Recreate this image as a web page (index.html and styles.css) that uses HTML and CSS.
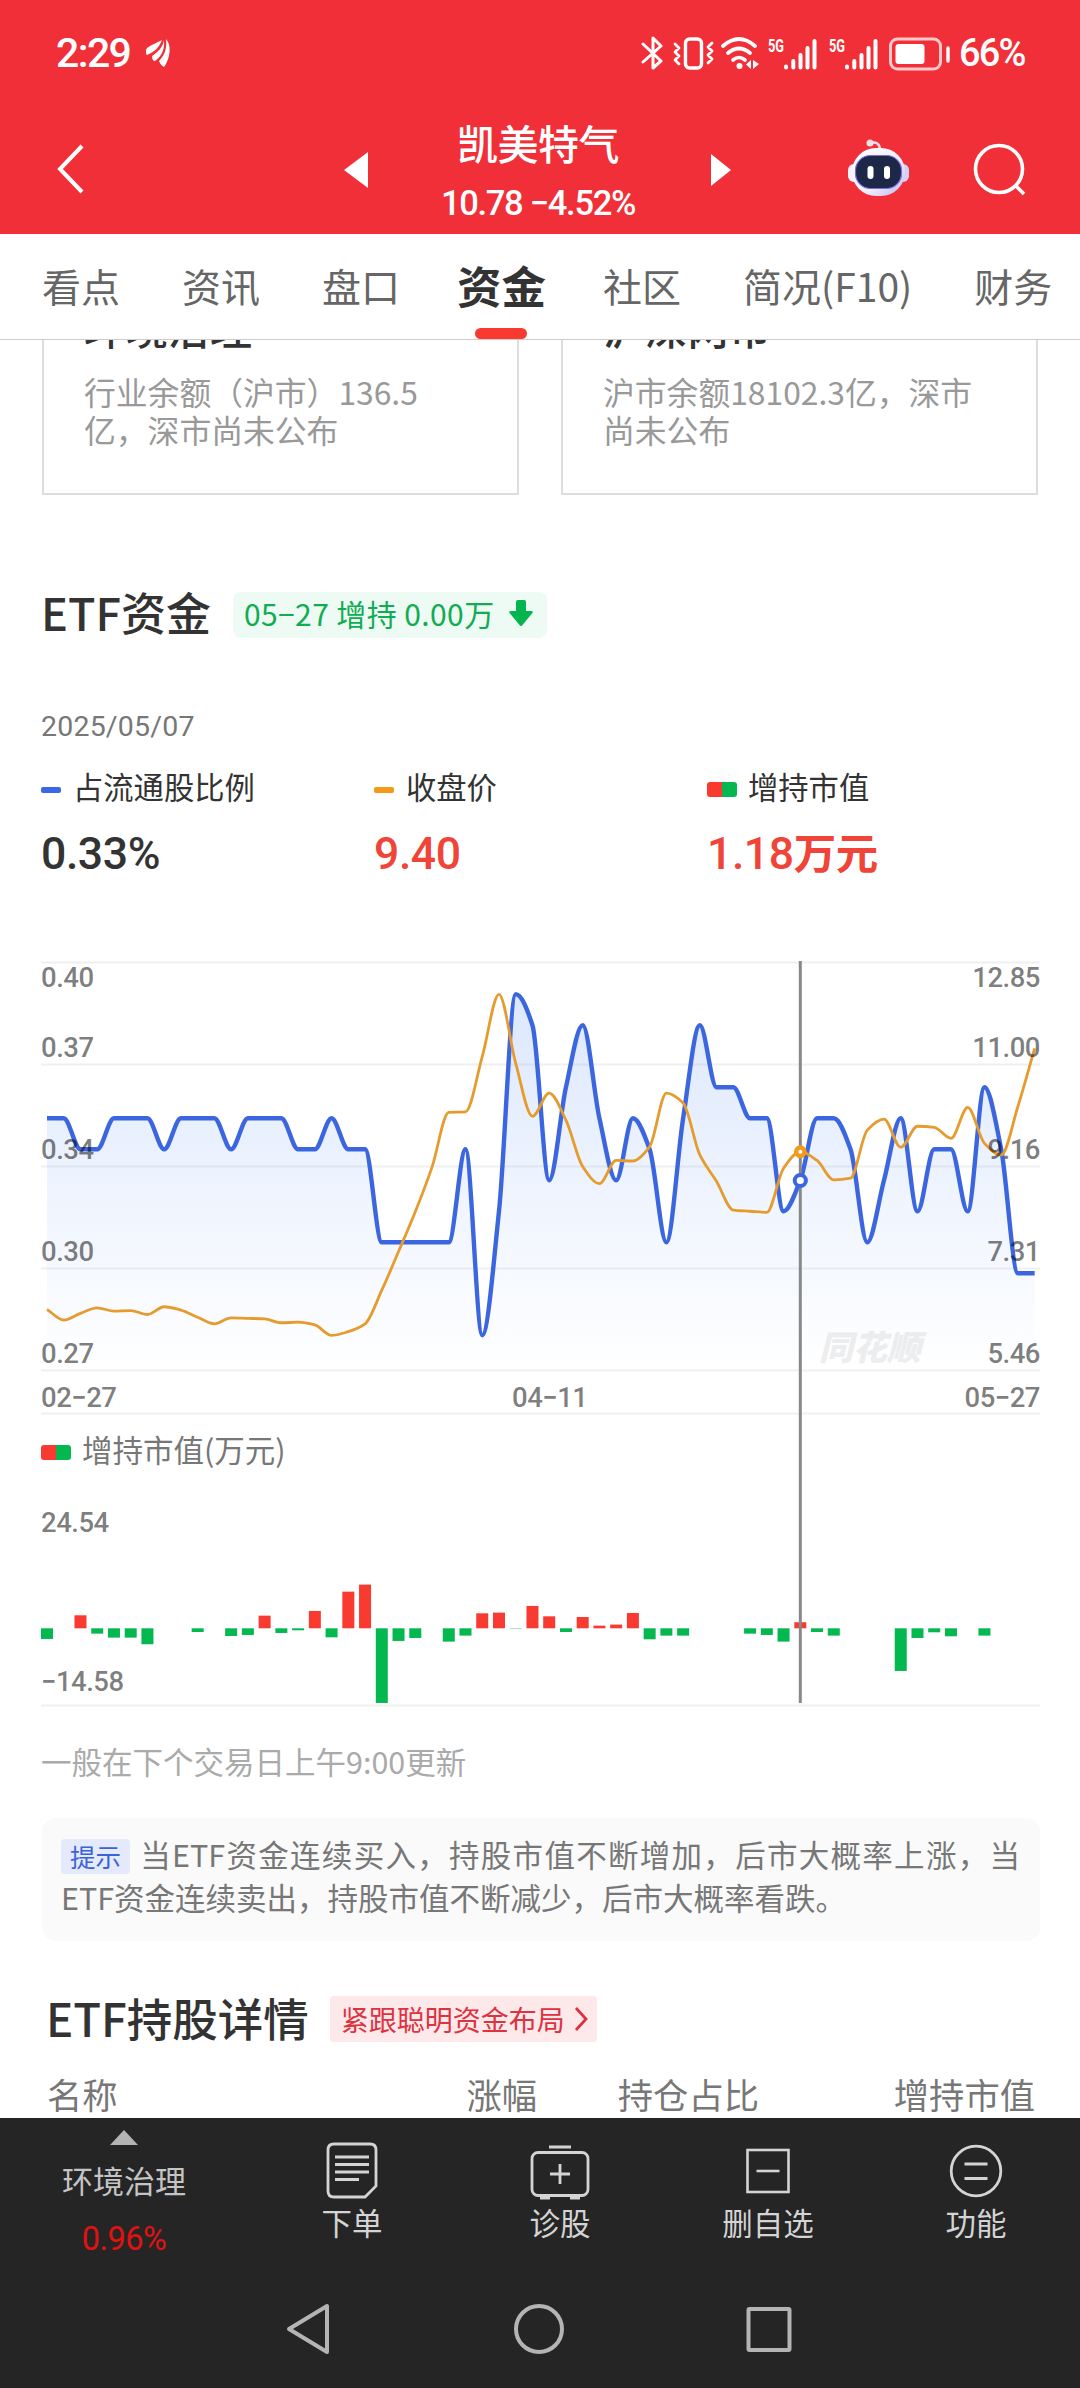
FILE: index.html
```html
<!DOCTYPE html>
<html lang="zh-CN">
<head>
  <meta charset="UTF-8" />
  <meta name="viewport" content="width=device-width, initial-scale=1.0" />
  <title>凯美特气 - 资金</title>
  <link rel="stylesheet" href="styles.css">
</head>
<body>

  <header>
    <div class="status">
      <span class="time">2:29</span>
      <svg class="app-icon" width="24" height="28" viewBox="0 0 24 28" fill="#fff">
        <path d="M16 1C12 3 5 6 1 9C-1 12 0 15 1 16C8 13 13 9 16 1Z"/>
        <path d="M18 1C17 8 12 13 6 17C6 20 7 22 9 22C14 18 19 13 18 1Z"/>
        <path d="M20 0C21 9 19 16 13 22C14 25 16 27 18 28C24 20 26 6 20 0Z"/>
      </svg>
      <svg class="sys-icons" width="310" height="36" viewBox="0 0 310 36" fill="none" stroke="#fff" stroke-width="3" stroke-linecap="round" stroke-linejoin="round">
        <path d="M2 9L20 26L12 33V3L20 11L2 27" stroke-width="3"/>
        <rect x="44.500" y="4" width="16" height="29" rx="4" stroke-width="3.400"/>
        <path d="M34 9l4 4l-4 4l4 4l-4 4l4 4M71 8l-4 4l4 4l-4 4l4 4l-4 4" stroke-width="2.800"/>
        <path d="M82 11Q98 -3 114 11" stroke-width="3.800"/>
        <path d="M87 18Q98 9 109 18" stroke-width="3.800"/>
        <path d="M92 25Q98 20 104 25" stroke-width="3.600"/>
        <circle cx="98.500" cy="31" r="3" fill="#fff" stroke="none"/>
        <path d="M110 25v9l-5 -4.500zM112 25v9l6 -5z" fill="#fff" stroke="none"/>
        <path d="M145 31.500v1M152.300 26v6.500M159.500 20v12.500M166.500 13v19.500M173.500 6v26.500" stroke-width="4"/>
        <path d="M206 31.500v1M213.300 26v6.500M220.500 20v12.500M227.500 13v19.500M234.500 6v26.500" stroke-width="4"/>
        <rect x="249.500" y="4" width="50" height="30" rx="7" stroke="#ffc9cb"/>
        <rect x="254.500" y="9" width="29" height="20" rx="3" fill="#fff" stroke="none"/>
        <path d="M307 13v13" stroke-width="3.400"/>
        <text class="net" x="127" y="17" textLength="16" lengthAdjust="spacingAndGlyphs">5G</text>
        <text class="net" x="188" y="17" textLength="16" lengthAdjust="spacingAndGlyphs">5G</text>
      </svg>
      <span class="battery">66%</span>
    </div>
    <div class="navbar">
      <svg class="back" width="30" height="52" viewBox="0 0 30 52"><path d="M27 3L5 26L27 49" fill="none" stroke="#fff" stroke-width="4"/></svg>
      <svg class="prev" width="24" height="36" viewBox="0 0 24 36"><path d="M24 0V36L0 18Z" fill="#fff"/></svg>
      <div class="stock">
        <div class="stock-name">凯美特气</div>
        <div class="stock-price">10.78 −4.52%</div>
      </div>
      <svg class="next" width="20" height="32" viewBox="0 0 20 32"><path d="M0 0V32L20 16Z" fill="#fff"/></svg>
      <svg class="robot" width="62" height="60" viewBox="0 0 62 60">
        <defs>
          <linearGradient id="head" x1="0" y1="0" x2="1" y2="1">
            <stop offset="0" stop-color="#ffffff"/>
            <stop offset=".6" stop-color="#f1eefb"/>
            <stop offset="1" stop-color="#b9b5f0"/>
          </linearGradient>
        </defs>
        <path d="M23 5Q31 3 32 11" fill="none" stroke="#f9dfe6" stroke-width="2.500"/>
        <circle cx="22" cy="5" r="3.500" fill="#fbdde2"/>
        <rect x="0" y="26" width="12" height="18" rx="6" fill="#f4f0fc"/>
        <rect x="49" y="26" width="12" height="18" rx="6" fill="#d5d0f5"/>
        <rect x="4" y="10" width="53" height="48" rx="24" fill="url(#head)"/>
        <rect x="7.500" y="17.500" width="46" height="33" rx="15" fill="#1d2748" stroke="#7c6be0" stroke-width="1.200"/>
        <rect x="19.500" y="28" width="6" height="13" rx="3" fill="#fff"/>
        <rect x="36" y="28" width="6" height="13" rx="3" fill="#fff"/>
      </svg>
      <svg class="search" width="54" height="54" viewBox="0 0 54 54" fill="none" stroke="#fff" stroke-width="3.600">
        <circle cx="26" cy="26" r="23.500"/><path d="M42 42L51 51"/>
      </svg>
    </div>
  </header>

  <nav class="tabs">
    <span>看点</span>
    <span>资讯</span>
    <span>盘口</span>
    <span class="active">资金</span>
    <span>社区</span>
    <span>简况(F10)</span>
    <span>财务</span>
  </nav>

  <main>
    <div class="cards">
      <div class="card">
        <h3>环境治理</h3>
        <p>行业余额（沪市）136.5<br>亿，深市尚未公布</p>
      </div>
      <div class="card">
        <h3>沪深两市</h3>
        <p>沪市余额18102.3亿，深市<br>尚未公布</p>
      </div>
    </div>

    <div class="section-title">
      <h2>ETF资金</h2>
      <div class="badge-green">
        05−27 增持 0.00万
        <svg width="24" height="26" viewBox="0 0 24 26"><path d="M7 2Q7 0 9 0H15Q17 0 17 2V11H22Q25 11 23 13.500L13.500 25Q12 27 10.500 25L1 13.500Q-1 11 2 11H7Z" fill="#04b44f"/></svg>
      </div>
    </div>

    <div class="date">2025/05/07</div>

    <div class="legend">
      <div>
        <div class="label"><i class="dash blue"></i>占流通股比例</div>
        <div class="value">0.33%</div>
      </div>
      <div>
        <div class="label"><i class="dash orange"></i>收盘价</div>
        <div class="value red">9.40</div>
      </div>
      <div>
        <div class="label"><i class="swatch"></i>增持市值</div>
        <div class="value red">1.18<b>万元</b></div>
      </div>
    </div>

    <div class="charts">
      <svg id="chart" width="1080" height="760" viewBox="0 950 1080 760">
        <defs>
          <linearGradient id="area" gradientUnits="userSpaceOnUse" x1="0" y1="994" x2="0" y2="1370">
            <stop offset="0" stop-color="#3f7ef5" stop-opacity=".18"/>
            <stop offset="1" stop-color="#3f7ef5" stop-opacity="0"/>
          </linearGradient>
        </defs>
        <path class="grid" d="M41 962.500H1040M41 1064.500H1040M41 1166.500H1040M41 1268.500H1040M41 1370.500H1040M41 1413.500H1040M41 1705.500H1040"/>
        <text class="watermark" x="819" y="1360" textLength="102">同花顺</text>
        <path id="ratioArea" fill="url(#area)"/>
        <path id="ratioLine" fill="none" stroke="#3b66e0" stroke-width="4.400"/>
        <path id="priceLine" fill="none" stroke="#e69b2e" stroke-width="2.800"/>
        <g id="bars"></g>
        <path class="cursor" d="M800.300 961V1703"/>
        <circle cx="800.300" cy="1151.700" r="4.200" fill="#fff" stroke="#f39a1b" stroke-width="4.400"/>
        <circle cx="800.300" cy="1180.500" r="5.600" fill="#fff" stroke="#3b66e0" stroke-width="4"/>
        <g class="axis">
          <text x="41" y="987">0.40</text>
          <text x="41" y="1057">0.37</text>
          <text x="41" y="1159">0.34</text>
          <text x="41" y="1261">0.30</text>
          <text x="41" y="1363">0.27</text>
          <text x="41" y="1407">02−27</text>
          <text x="512" y="1407">04−11</text>
          <text x="41" y="1532">24.54</text>
          <text x="41" y="1691">−14.58</text>
        </g>
        <g class="axis right">
          <text x="1040" y="987">12.85</text>
          <text x="1040" y="1057">11.00</text>
          <text x="1040" y="1159">9.16</text>
          <text x="1040" y="1261">7.31</text>
          <text x="1040" y="1363">5.46</text>
          <text x="1040" y="1407">05−27</text>
        </g>
      </svg>
      <div class="bar-legend"><i class="swatch"></i>增持市值(万元)</div>
    </div>

    <p class="note">一般在下个交易日上午9:00更新</p>

    <div class="tip"><span class="tag">提示</span>当ETF资金连续买入，持股市值不断增加，后市大概率上涨，当ETF资金连续卖出，持股市值不断减少，后市大概率看跌。</div>

    <div class="section-title detail">
      <h2>ETF持股详情</h2>
      <div class="badge-red">
        紧跟聪明资金布局
        <svg width="14" height="24" viewBox="0 0 14 24"><path d="M2 1L12 12L2 23" fill="none" stroke="#e03040" stroke-width="2.800"/></svg>
      </div>
    </div>

    <div class="thead">
      <span>名称</span>
      <span>涨幅</span>
      <span>持仓占比</span>
      <span>增持市值</span>
    </div>
  </main>

  <footer>
    <div class="toolbar">
      <div class="tool index">
        <svg width="28" height="15" viewBox="0 0 28 15"><path d="M14 0L28 15H0Z" fill="#b4b4b4"/></svg>
        <span>环境治理</span>
        <em>0.96%</em>
      </div>
      <div class="tool">
        <svg width="60" height="60" viewBox="0 0 60 60" fill="none" stroke="#d4d4d4" stroke-width="2.800">
          <path d="M12 4H48Q54 4 54 10V46L43 57H12Q6 57 6 51V10Q6 4 12 4Z"/>
          <path d="M13 17H47M13 24.500H47M13 32H47M13 39.500H37"/>
        </svg>
        <span>下单</span>
      </div>
      <div class="tool">
        <svg width="60" height="60" viewBox="0 0 60 60" fill="none" stroke="#d4d4d4" stroke-width="2.800">
          <rect x="2" y="12.500" width="56" height="43" rx="6"/>
          <path d="M19 7H41M30 24V44M20 34H40"/>
          <path d="M10 57.500H20M40 57.500H50" stroke-width="4"/>
        </svg>
        <span>诊股</span>
      </div>
      <div class="tool">
        <svg width="60" height="60" viewBox="0 0 60 60" fill="none" stroke="#d4d4d4" stroke-width="2.600">
          <rect x="9.500" y="10" width="41" height="42"/>
          <path d="M18.500 31H41.500"/>
        </svg>
        <span>删自选</span>
      </div>
      <div class="tool">
        <svg width="60" height="60" viewBox="0 0 60 60" fill="none" stroke="#d4d4d4" stroke-width="2.800">
          <circle cx="30" cy="31" r="24.800"/>
          <path d="M18.500 24H41.500M18.500 38.500H41.500"/>
        </svg>
        <span>功能</span>
      </div>
    </div>
    <div class="sysnav">
      <svg width="50" height="54" viewBox="0 0 50 54"><path d="M43 4V50L5 27Z" fill="none" stroke="#b4b4b4" stroke-width="4" stroke-linejoin="round"/></svg>
      <svg width="54" height="54" viewBox="0 0 54 54"><circle cx="27" cy="27" r="23" fill="none" stroke="#b4b4b4" stroke-width="4"/></svg>
      <svg width="50" height="54" viewBox="0 0 50 54"><rect x="4.500" y="7" width="41" height="41" rx="1" fill="none" stroke="#b4b4b4" stroke-width="4"/></svg>
    </div>
  </footer>

<script src="chart.js"></script>
</body>
</html>
```

FILE: styles.css
```css
* {
  box-sizing: border-box;
}
body {
  margin: 0;
  width: 1080px;
  height: 2388px;
  overflow: hidden;
  background: #fff;
  color: #333;
  font-family: "Noto Sans CJK SC", sans-serif;
}
h2, h3, p {
  margin: 0;
  font-weight: 500;
}
svg {
  display: block;
  flex: none;
}
header {
  height: 234px;
  background: #f12f38;
  color: #fff;
}
.status {
  display: flex;
  align-items: center;
  height: 106px;
  padding: 0 40px 0 56px;
  font-family: Roboto, sans-serif;
}
.time {
  width: 90px;
  font-size: 41px;
  font-weight: 500;
  letter-spacing: -1.6px;
}
.sys-icons {
  margin-left: 471px;
}
.net {
  font-size: 19px;
  font-weight: 700;
  fill: #fff;
  stroke: none;
}
.battery {
  margin-left: 8px;
  font-size: 38px;
  font-weight: 500;
  letter-spacing: -1.8px;
}
.navbar {
  display: flex;
  align-items: center;
  height: 128px;
  padding-left: 55px;
}
.back {
  margin: -2px 259px 0 0;
}
.stock {
  width: 343px;
  height: 128px;
  padding: 6px 3px 0 0;
  text-align: center;
}
.stock-name {
  height: 60px;
  font-size: 41px;
  font-weight: 500;
  line-height: 60px;
  letter-spacing: -0.5px;
}
.stock-price {
  font: 500 34.5px/50px Roboto, sans-serif;
  letter-spacing: -1.3px;
  margin-top: 6px;
}
.robot {
  margin: -4px 63px 0 117px;
}
.tabs {
  display: flex;
  gap: 62px;
  height: 106px;
  padding-left: 42px;
  border-bottom: 1px solid #ccc;
  font-size: 39px;
  line-height: 102px;
  color: #666;
  white-space: nowrap;
}
.tabs .active {
  position: relative;
  margin: 0 -5px;
  font-size: 44.5px;
  font-weight: 700;
  color: #333;
}
.tabs .active::after {
  content: "";
  position: absolute;
  left: 18px;
  bottom: 0;
  width: 52px;
  height: 11px;
  border-radius: 6px;
  background: #f93a31;
}
main {
  height: 1778px;
  overflow: hidden;
}
.cards {
  display: flex;
  gap: 42px;
  height: 155px;
  padding: 0 42px;
}
.card {
  flex: 1;
  padding-left: 40px;
  border: 2px solid #ddd;
  border-top: none;
}
.card h3 {
  height: 66px;
  margin-top: -34px;
  font-size: 42px;
  line-height: 42px;
}
.card p {
  color: #999;
  font-size: 31.8px;
  font-weight: 400;
  line-height: 38px;
}
.section-title {
  display: flex;
  align-items: center;
  height: 60px;
  margin: 87px 0 0 41px;
}
.section-title h2 {
  font-size: 45px;
  line-height: 60px;
}
.badge-green {
  display: flex;
  align-items: center;
  gap: 14px;
  height: 46px;
  margin: 6px 0 0 22px;
  padding: 0 14px 5px 11px;
  border-radius: 8px;
  background: #eefaf4;
  color: #10ad52;
  font-size: 30px;
  letter-spacing: 0.4px;
}
.date {
  height: 40px;
  margin: 65px 0 0 41px;
  color: #777;
  font: 28.5px/40px Roboto, sans-serif;
  letter-spacing: 0.2px;
}
.legend {
  display: grid;
  grid-template-columns: 333px 333px 1fr;
  height: 150px;
  margin: 14px 0 0 41px;
}
.label {
  display: flex;
  align-items: center;
  height: 50px;
  font-size: 30.3px;
}
.dash {
  width: 20px;
  height: 6px;
  margin: 7px 12px 0 0;
  border-radius: 2px;
}
.blue {
  background: #3b66e5;
}
.orange {
  background: #f39a1b;
}
.swatch {
  width: 30px;
  height: 15px;
  margin: 7px 11px 0 0;
  border-radius: 3px;
  background: linear-gradient(90deg, #f93a31 50%, #04b850 50%);
}
.value {
  margin-top: 13px;
  font: 500 44.5px/60px Roboto, "Noto Sans CJK SC", sans-serif;
  letter-spacing: -0.4px;
}
.value b {
  font-size: 42.5px;
}
.red {
  color: #f04438;
}
.charts {
  position: relative;
  height: 760px;
  margin-top: 39px;
}
.bar-legend {
  position: absolute;
  left: 41px;
  top: 476px;
  display: flex;
  align-items: center;
  height: 46px;
  color: #777;
  font-size: 30.5px;
}
.grid {
  stroke: #f0f0f0;
  stroke-width: 2;
}
.cursor {
  stroke: #888;
  stroke-width: 3;
}
.axis {
  font: 500 27.5px Roboto, sans-serif;
  letter-spacing: -0.5px;
  fill: rgba(0, 0, 0, 0.52);
}
.right {
  text-anchor: end;
}
.watermark {
  font-size: 34px;
  font-weight: 900;
  font-style: italic;
  fill: #eee;
}
.up {
  fill: #f93a31;
}
.down {
  fill: #04b850;
}
.note {
  margin: 31px 0 0 41px;
  color: #aaa;
  font-size: 30.5px;
  font-weight: 400;
  line-height: 40px;
}
.tip {
  height: 123px;
  margin: 37px 40px 0 42px;
  padding: 15px 20px 0 19px;
  border-radius: 14px;
  background: #fafafa;
  color: #777;
  font-size: 30.5px;
  line-height: 42.5px;
  text-align: justify;
}
.tag {
  display: inline-block;
  height: 35px;
  margin-right: 9px;
  padding: 0 9px;
  border-radius: 4px;
  background: #e4eafb;
  color: #3b62d8;
  font-size: 25.5px;
  line-height: 34px;
}
.detail {
  margin: 46px 0 0 46px;
}
.detail h2 {
  font-size: 45.5px;
}
.badge-red {
  display: flex;
  align-items: center;
  gap: 9px;
  height: 46px;
  margin: 4px 0 0 21px;
  padding: 0 9px 1px 11px;
  border-radius: 4px;
  background: #fde8ea;
  color: #dc3340;
  font-size: 28px;
}
.thead {
  display: grid;
  grid-template-columns: 250px 1fr 222px 276px;
  margin: 20px 45px 0 47px;
  color: #777;
  font-size: 35.3px;
  line-height: 54px;
  text-align: right;
}
.thead span:first-child {
  text-align: left;
}
footer {
  height: 270px;
  background: #252525;
  color: #d4d4d4;
}
.toolbar {
  display: flex;
  height: 150px;
}
.tool {
  display: flex;
  flex-direction: column;
  align-items: center;
  width: 208px;
  padding-top: 22px;
  font-size: 30.5px;
  line-height: 44px;
}
.index {
  width: 248px;
  padding-top: 12px;
  color: #c4c4c4;
}
.index span {
  margin: 13px 0 12px;
  font-size: 31px;
}
.index em {
  color: #e01212;
  font: 400 32.5px/50px Roboto, sans-serif;
  letter-spacing: -0.5px;
}
.sysnav {
  display: flex;
  justify-content: space-between;
  padding: 34px 286px 0 284px;
}
```

FILE: chart.js
```js
// 占流通股比例 (%)
const ratio = [
  0.35, 0.35, 0.34, 0.34, 0.35, 0.35, 0.35, 0.34, 0.35, 0.35, 0.35, 0.34, 0.35, 0.35, 0.35,
  0.34, 0.34, 0.35, 0.34, 0.34, 0.31, 0.31, 0.31, 0.31, 0.31, 0.34, 0.28, 0.32, 0.39, 0.38,
  0.33, 0.36, 0.38, 0.35, 0.33, 0.35, 0.34, 0.31, 0.35, 0.38, 0.36, 0.36, 0.35, 0.35, 0.32,
  0.33, 0.35, 0.35, 0.34, 0.31, 0.33, 0.35, 0.32, 0.34, 0.34, 0.32, 0.36, 0.34, 0.30, 0.30
];

// 收盘价
const price = [
  6.56, 6.37, 6.49, 6.59, 6.53, 6.54, 6.47, 6.61, 6.55, 6.42, 6.30, 6.41, 6.40, 6.39, 6.32,
  6.33, 6.28, 6.09, 6.16, 6.30, 6.91, 7.61, 8.33, 9.14, 10.13, 10.14, 11.14, 12.27, 11.02, 10.06,
  10.48, 9.99, 9.15, 8.84, 9.26, 9.25, 9.51, 10.48, 10.30, 9.36, 8.88, 8.36, 8.34, 8.32, 9.12,
  9.42, 9.26, 8.91, 8.94, 9.81, 10.01, 9.50, 9.88, 9.86, 9.66, 10.22, 9.57, 9.36, 10.24, 11.29
];

// 增持市值 (万元)
const amount = [
  -2.08, 0, 2.54, -1.04, -1.82, -1.82, -3.12, 0, 0, -0.72, 0, -1.5, -1.3, 2.47, -0.91,
  -0.39, 3.39, -1.76, 7.16, 8.53, -14.58, -2.47, -1.89, 0, -2.6, -1.43, 2.93, 3.06, -0.07, 4.36,
  2.34, -0.72, 2.21, 0.52, 0.72, 2.99, -2.15, -1.43, -1.43, 0, 0, 0, -1.04, -1.3, -2.6,
  1.18, -0.72, -1.43, 0, 0, 0, -8.33, -1.89, -0.78, -1.56, 0, -1.43, 0, 0, 0
];

const step = 16.74;
const px = i => 47 + i * step;

// 单调三次插值
function smooth(ys) {
  const n = ys.length;
  const d = [];
  for (let i = 0; i < n - 1; i++) d.push((ys[i + 1] - ys[i]) / step);
  const m = [d[0]];
  for (let i = 1; i < n - 1; i++) {
    m.push(d[i - 1] * d[i] <= 0 ? 0 : 2 * d[i - 1] * d[i] / (d[i - 1] + d[i]));
  }
  m.push(d[n - 2]);
  let path = `M${px(0)} ${ys[0]}`;
  for (let i = 0; i < n - 1; i++) {
    const h = step / 3;
    path += `C${px(i) + h} ${ys[i] + m[i] * h} ${px(i + 1) - h} ${ys[i + 1] - m[i + 1] * h} ${px(i + 1)} ${ys[i + 1]}`;
  }
  return path;
}

const ratioPath = smooth(ratio.map(v => 994.3 + (0.39 - v) * 3100));
document.getElementById("ratioLine").setAttribute("d", ratioPath);
document.getElementById("ratioArea").setAttribute("d", `${ratioPath}V1370H47Z`);
document.getElementById("priceLine").setAttribute("d", smooth(price.map(v => 962.3 + (12.85 - v) * 55.2)));

document.getElementById("bars").innerHTML = amount.map((v, i) => {
  const h = Math.abs(v) * 5.12;
  return h ? `<rect class="${v > 0 ? "up" : "down"}" x="${px(i) - 6}" y="${v > 0 ? 1628.3 - h : 1628.3}" width="12" height="${h}"/>` : "";
}).join("");
```
